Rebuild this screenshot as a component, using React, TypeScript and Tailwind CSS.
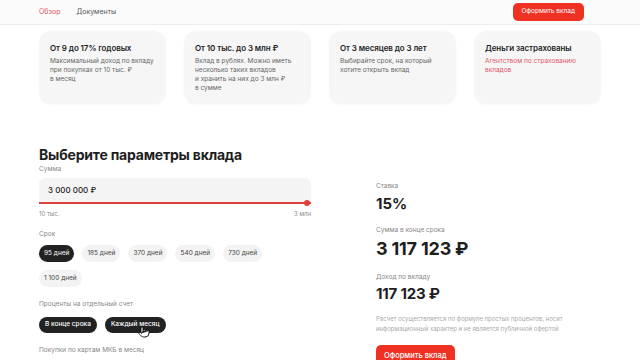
import { Pointer } from 'lucide-react';

const features = [
  {
    title: 'От 9 до 17% годовых',
    lines: ['Максимальный доход по вкладу', 'при покупках от 10 тыс. ₽', 'в месяц'],
  },
  {
    title: 'От 10 тыс. до 3 млн ₽',
    lines: ['Вклад в рублях. Можно иметь', 'несколько таких вкладов', 'и хранить на них до 3 млн ₽', 'в сумме'],
  },
  {
    title: 'От 3 месяцев до 3 лет',
    lines: ['Выбирайте срок, на который', 'хотите открыть вклад'],
  },
  {
    title: 'Деньги застрахованы',
    lines: ['Агентством по страхованию', 'вкладов'],
    accent: true,
  },
];

const terms = ['95 дней', '185 дней', '370 дней', '540 дней', '730 дней', '1 100 дней'];

function Header() {
  return (
    <header className="h-[25px] border-b border-[#ededed] bg-[#fbfbfb]">
      <div className="mx-auto flex h-full w-[562px] items-center justify-between">
        <nav className="flex items-center gap-[16px] text-[7px]">
          <span className="text-[#e2566a]">Обзор</span>
          <span className="text-[#555]">Документы</span>
        </nav>
        <button className="mr-[17px] h-[18px] rounded-[5px] bg-[#ef3124] px-[9px] text-[6.5px] text-white">
          Оформить вклад
        </button>
      </div>
    </header>
  );
}

function Chip({ label, active }: { label: string; active?: boolean }) {
  return (
    <span
      className={
        active
          ? 'flex h-[17px] items-center rounded-full bg-[#222] px-[5px] text-[6.5px] text-white'
          : 'flex h-[17px] items-center rounded-full bg-[#f3f3f3] px-[5px] text-[6.5px] text-[#444]'
      }
    >
      {label}
    </span>
  );
}

export default function App() {
  return (
    <main className="h-[360px] w-[640px] overflow-hidden bg-white text-[#1e1e1e]" style={{ fontFamily: 'Inter, "Noto Sans", sans-serif' }}>
      <Header />

      <div className="mx-auto w-[562px]">
        <section className="mt-[6px] grid grid-cols-4 gap-[18px]">
          {features.map((f) => (
            <div key={f.title} className="h-[73px] rounded-[12px] bg-[#f6f6f6] px-[11px] pt-[11px] shadow-[0_1px_3px_rgba(0,0,0,0.03)]">
              <h3 className="text-[8px] font-semibold leading-[12px] tracking-[-0.1px]">{f.title}</h3>
              <p className={`mt-[3px] text-[6.5px] leading-[9px] ${f.accent ? 'text-[#e2566a]' : 'text-[#666]'}`}>
                {f.lines.map((l, i) => (
                  <span key={i} className="block">
                    {l}
                  </span>
                ))}
              </p>
            </div>
          ))}
        </section>

        <section className="mt-[42px] flex">
          <div className="w-[272px]">
            <h2 className="text-[14px] font-bold leading-[18px] tracking-[-0.2px]">Выберите параметры вклада</h2>

            <p className="text-[6.5px] leading-[10px] text-[#888]">Сумма</p>
            <div className="relative mt-[4px]">
              <div className="flex h-[24px] items-center rounded-t-[6px] bg-[#f4f4f4] px-[9px] text-[8px] font-medium">3 000 000 ₽</div>
              <div className="relative h-[2px] bg-[#e0403a]">
                <span className="absolute right-[1px] top-[-2px] h-[6px] w-[6px] rounded-full bg-[#e0403a]" />
              </div>
            </div>
            <div className="mt-[5px] flex justify-between text-[6px] leading-[10px] text-[#888]">
              <span>10 тыс.</span>
              <span>3 млн</span>
            </div>

            <p className="mt-[10px] text-[6.5px] leading-[10px] text-[#888]">Срок</p>
            <div className="mt-[6px] flex flex-wrap gap-[8px]">
              {terms.map((t, i) => (
                <Chip key={t} label={t} active={i === 0} />
              ))}
            </div>

            <p className="mt-[12px] text-[6.5px] leading-[10px] text-[#888]">Проценты на отдельный счет</p>
            <div className="relative mt-[8px] flex gap-[8px]">
              <span className="flex h-[16px] items-center rounded-full bg-[#222] px-[6px] text-[6.5px] font-medium text-white">В конце срока</span>
              <span className="flex h-[16px] items-center rounded-full bg-[#222] px-[6px] text-[6.5px] font-medium text-white">Каждый месяц</span>
              <Pointer className="absolute left-[99px] top-[9px] h-[12px] w-[12px] fill-white text-black" strokeWidth={1.6} />
            </div>

            <p className="mt-[12px] text-[6.5px] leading-[10px] text-[#888]">Покупки по картам МКБ в месяц</p>
          </div>

          <div className="ml-[65px] pt-[35px]">
            <p className="text-[6.5px] leading-[10px] text-[#888]">Ставка</p>
            <p className="mt-[4px] text-[15px] font-bold leading-[18px]">15%</p>

            <p className="mt-[12px] text-[6.5px] leading-[10px] text-[#888]">Сумма в конце срока</p>
            <p className="mt-[3px] text-[18px] font-bold leading-[22px] tracking-[-0.2px]">3 117 123 ₽</p>

            <p className="mt-[12px] text-[6.5px] leading-[10px] text-[#888]">Доход по вкладу</p>
            <p className="mt-[3px] text-[15px] font-bold leading-[18px] tracking-[-0.2px]">117 123 ₽</p>

            <p className="mt-[11px] text-[6px] leading-[9.5px] text-[#aaa]">
              Расчет осуществляется по формуле простых процентов, носит
              <br />
              информационный характер и не является публичной офертой
            </p>
            <button className="mt-[12px] h-[22px] rounded-[5px] bg-[#ef3124] px-[8px] text-[7.5px] font-medium text-white">Оформить вклад</button>
          </div>
        </section>
      </div>
    </main>
  );
}
